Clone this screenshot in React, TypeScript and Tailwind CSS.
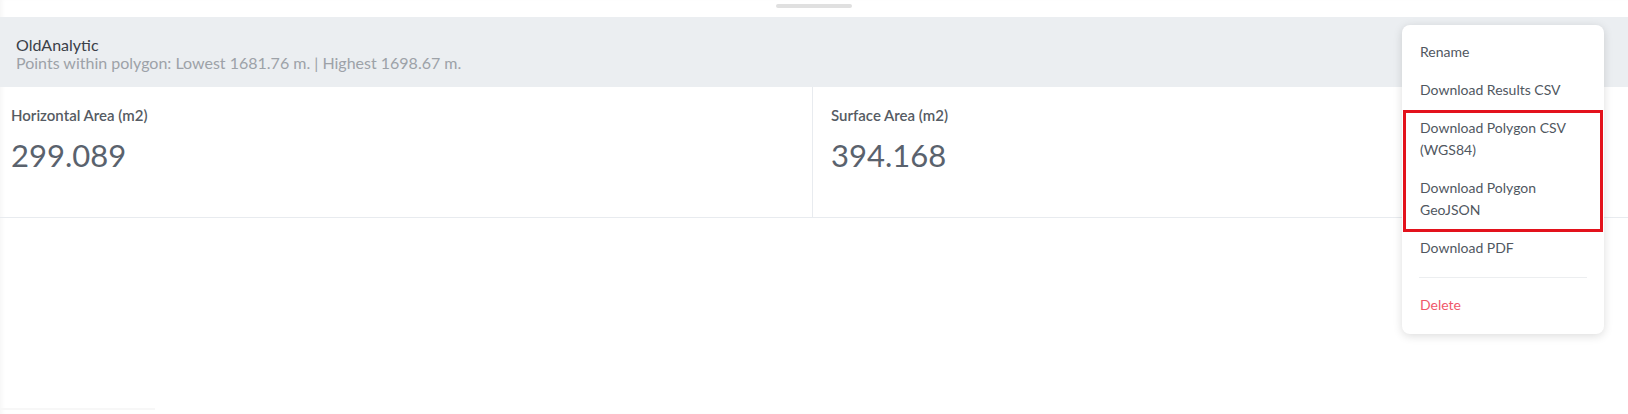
const menuItems = [
  { label: "Rename" },
  { label: "Download Results CSV" },
  { label: "Download Polygon CSV (WGS84)", marked: true },
  { label: "Download Polygon GeoJSON", marked: true },
  { label: "Download PDF" },
];

function Stat({ label, value, className }: { label: string; value: string; className?: string }) {
  return (
    <div className={className}>
      <p className="text-[15px] font-semibold leading-5 text-[#555b63]">{label}</p>
      <p className="mt-[10px] text-[31px] leading-10 text-[#5a626d]">{value}</p>
    </div>
  );
}

export default function App() {
  return (
    <div
      className="relative h-[414px] w-full overflow-hidden bg-white shadow-[inset_4px_0_4px_-2px_rgba(0,0,0,0.04)]"
      style={{ fontFamily: "Lato, 'Open Sans', sans-serif" }}
    >
      {/* drag handle */}
      <div className="flex h-[17px] justify-center pt-1">
        <div className="h-1 w-[76px] rounded-full bg-[#e0e0e0]" />
      </div>

      <header className="h-[70px] bg-[#ebeef1] pl-4 pt-[19px]">
        <h2 className="text-[16px] leading-[18px] text-[#3a4048]">OldAnalytic</h2>
        <p className="text-[16px] leading-[18px] text-[#9da2a8]">
          Points within polygon: Lowest 1681.76 m. | Highest 1698.67 m.
        </p>
      </header>

      <div className="grid h-[131px] grid-cols-[812px_1fr] border-b border-[#e8ebef]">
        <Stat label="Horizontal Area (m2)" value="299.089" className="pl-[11px] pt-[18px]" />
        <Stat label="Surface Area (m2)" value="394.168" className="border-l border-[#e8ebef] pl-[18px] pt-[18px]" />
      </div>

      <div className="absolute bottom-[4px] left-0 h-[2px] w-[155px] bg-[#f7f7f7]" />

      {/* actions menu */}
      <div className="absolute left-[1402px] top-[25px] w-[202px] rounded-lg bg-white pt-2 pb-[10px] shadow-[0_2px_10px_rgba(0,0,0,0.14)]">
        <ul>
          {menuItems.map((item) => (
            <li
              key={item.label}
              className="px-[18px] py-2 text-[14px] leading-[22px] text-[#50575f]"
            >
              {item.label}
            </li>
          ))}
        </ul>
        <div className="mx-[17px] mt-[10px] h-px bg-[#eceef0]" />
        <div className="mt-2 px-[18px] py-2 text-[14px] leading-[22px] text-[#f0576a]">Delete</div>
        <div className="pointer-events-none absolute left-px top-[85px] h-[122px] w-[200px] border-[3px] border-[#e3121c]" />
      </div>
    </div>
  );
}
